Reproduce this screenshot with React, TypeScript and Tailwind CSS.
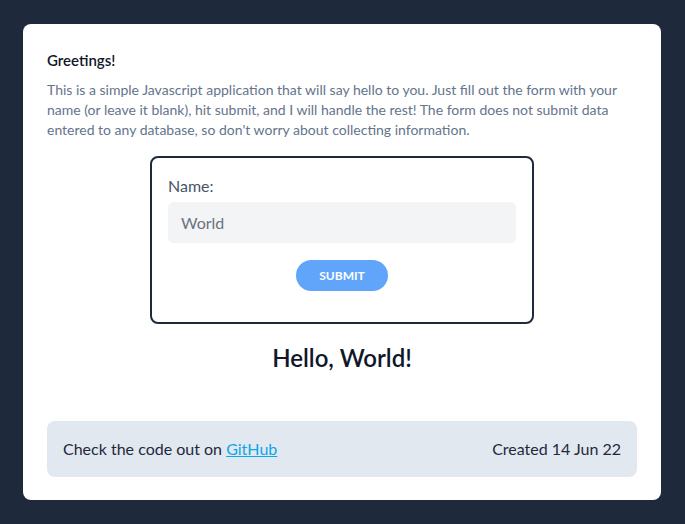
import { useState } from 'react';

const FONT = "font-['Lato','Noto_Sans',sans-serif]";

export default function App() {
  const [name, setName] = useState('World');
  const [greeted, setGreeted] = useState('World');

  return (
    <div className={`min-h-screen bg-[#1e293b] pl-[23px] pr-6 py-6 ${FONT}`}>
      <div className="bg-white rounded-lg px-6 pt-6 pb-[23px]">
        <h1 className="text-[15px] leading-6 font-semibold text-[#0f172a]">Greetings!</h1>
        <p className="mt-2 text-sm leading-5 text-[#64748b]">
          This is a simple Javascript application that will say hello to you. Just fill out the form with your
          name (or leave it blank), hit submit, and I will handle the rest! The form does not submit data
          entered to any database, so don't worry about collecting information.
        </p>

        <form
          className="mt-4 mx-auto w-96 border-2 border-[#1e293b] rounded-lg px-4 pt-4 pb-[31px] flex flex-col"
          onSubmit={(e) => {
            e.preventDefault();
            setGreeted(name.trim() || 'World');
          }}
        >
          <label className="text-base leading-6 text-[#475569]">Name:</label>
          <input
            value={name}
            onChange={(e) => setName(e.target.value)}
            placeholder="World"
            className="mt-1 h-[41px] rounded-md bg-[#f3f4f6] px-[13px] text-base text-[#6b7280] outline-none"
          />
          <button
            type="submit"
            className="mt-[17px] self-center w-[92px] h-[31px] rounded-full bg-[#60a5fa] text-white text-xs font-bold uppercase"
          >
            Submit
          </button>
        </form>

        <h2 className="mt-[18px] text-center text-2xl leading-8 font-semibold text-[#0f172a]">
          Hello, {greeted}!
        </h2>

        <div className="mt-[47px] h-14 rounded-lg bg-[#e2e8f0] px-4 flex items-center justify-between text-base text-[#1e293b]">
          <span>
            Check the code out on{' '}
            <a href="#" className="text-[#0ea5e9] underline">
              GitHub
            </a>
          </span>
          <span>Created 14 Jun 22</span>
        </div>
      </div>
    </div>
  );
}
